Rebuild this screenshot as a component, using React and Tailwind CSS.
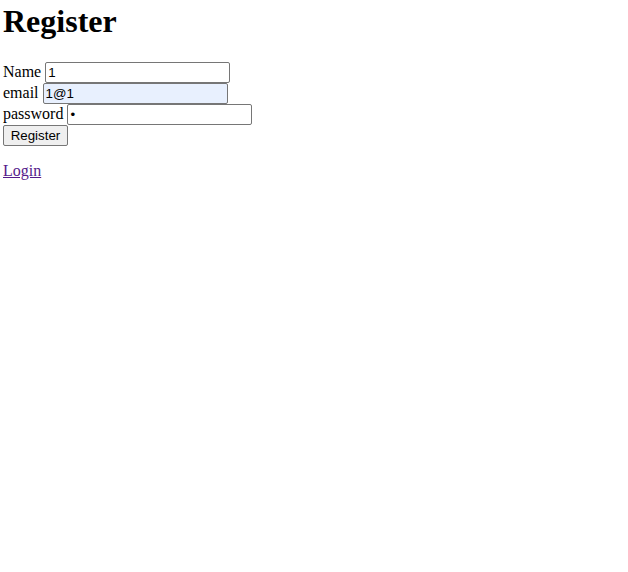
export default function App() {
  const serif = "font-['Liberation_Serif',serif]";
  const sans = "font-['Liberation_Sans',Arial,sans-serif]";
  const inputCls =
    "h-[21px] w-[185px] rounded-[2px] border border-[#767676] px-[2px] py-[1px] text-[13.333px] leading-[normal] text-black outline-none " +
    sans;
  return (
    <div className={"min-h-[572px] bg-white p-[3px] text-black leading-[normal] text-[16px] " + serif}>
      <h1 className="m-0 text-[32px] font-bold leading-[normal]">Register</h1>
      <form className="mt-[21.5px]" onSubmit={(e) => e.preventDefault()}>
        <div className="flex items-baseline">
          <label>Name</label>
          <span className="w-[4px]" />
          <input className={inputCls + " bg-white"} defaultValue="1" />
        </div>
        <div className="flex items-baseline">
          <label>email</label>
          <span className="w-[4px]" />
          <input className={inputCls + " bg-[#e8f0fe]"} defaultValue="1@1" />
        </div>
        <div className="flex items-baseline">
          <label>password</label>
          <span className="w-[4px]" />
          <input type="password" className={inputCls + " bg-white"} defaultValue="1" />
        </div>
        <div className="flex">
          <button
            type="submit"
            className={
              "flex h-[21px] w-[65px] items-center justify-center rounded-[2px] border border-[#767676] bg-[#efefef] px-[6px] text-[13.333px] leading-[normal] text-black " +
              sans
            }
          >
            Register
          </button>
        </div>
      </form>
      <p className="mt-[16px]">
        <a href="#" className="text-[#551a8b] underline">
          Login
        </a>
      </p>
    </div>
  );
}
